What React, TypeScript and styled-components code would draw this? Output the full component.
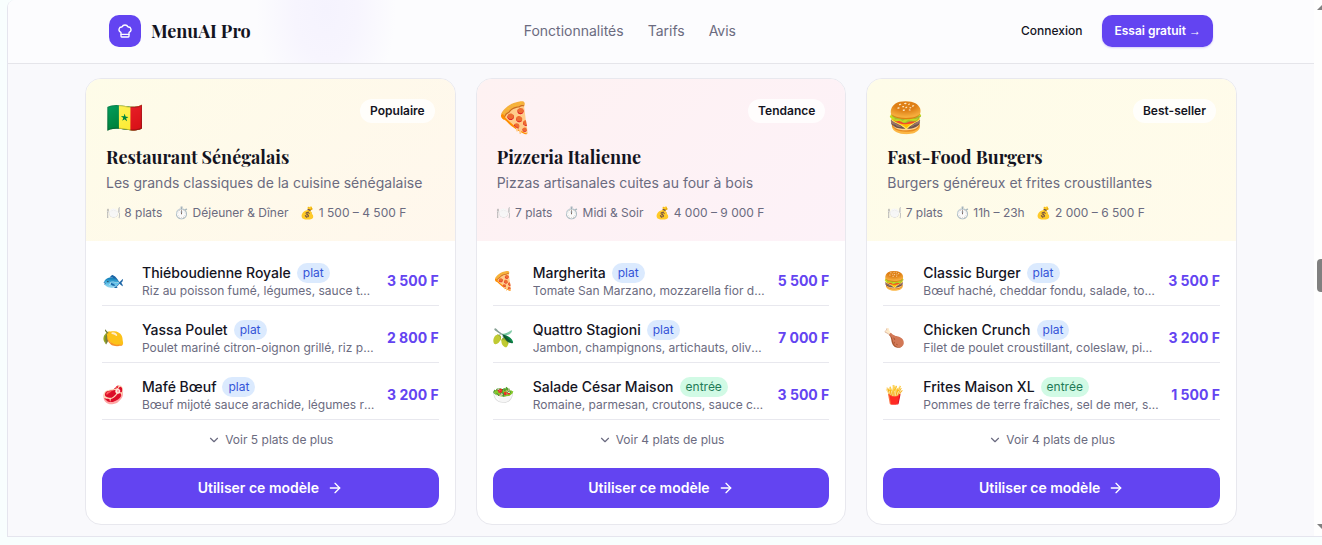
import React from 'react';
import styled, { createGlobalStyle } from 'styled-components';
import { ArrowRight, ChefHat, ChevronDown } from 'lucide-react';

const GlobalStyle = createGlobalStyle`
  *, *::before, *::after { box-sizing: border-box; }
  body {
    margin: 0;
    background: #f8fefe;
    color: #14141f;
    font-family: Inter, "Noto Color Emoji", sans-serif;
    font-size: 14px;
    line-height: 20px;
  }
  h1, h2, h3, p, ul { margin: 0; padding: 0; }
  ul { list-style: none; }
  a { color: inherit; text-decoration: none; }
  button { border: 0; font-family: inherit; cursor: pointer; }
`;

const serif = `"Playfair Display", "Liberation Serif", serif`;

const Frame = styled.div`
  display: flex;
  margin-left: 7px;
  border-left: 1px solid #e5e5ee;
  border-bottom: 1px solid #e5e5ee;
  border-top-left-radius: 8px;
  background: #fff;
  overflow: hidden;
`;

const Viewport = styled.div`
  flex: 1;
  min-width: 0;
  background: #f9f9fc;
`;

const ScrollTrack = styled.div`
  display: flex;
  flex-direction: column;
  align-items: flex-end;
  justify-content: space-between;
  width: 8px;
  padding: 4px 0 6px;
  background: #fefefe;
`;

const ScrollThumb = styled.div`
  width: 5px;
  height: 33px;
  margin-top: 16px;
  border-radius: 4px 0 0 4px;
  background: #808080;
`;

const Header = styled.header`
  border-bottom: 1px solid #e5e5ea;
  background:
    radial-gradient(ellipse 70px 110px at 318px 10px, #f5f3fe 0%, #f7f5fe 45%, #fcfcfe00 100%),
    #fcfcfe;
`;

const HeaderInner = styled.div`
  display: flex;
  align-items: center;
  justify-content: space-between;
  max-width: 1152px;
  margin: 0 auto;
  padding: 15px 24px 16px;
`;

const Brand = styled.a`
  display: flex;
  align-items: center;
  gap: 10px;
  font: 700 18px/28px ${serif};
`;

const BrandMark = styled.span`
  display: grid;
  place-items: center;
  width: 32px;
  height: 32px;
  border-radius: 10px;
  background: #6344f1;
  color: #fff;
`;

const Nav = styled.nav`
  display: flex;
  gap: 24px;
  color: #6b6b80;
`;

const Actions = styled.div`
  display: flex;
  align-items: center;
  gap: 8px;
`;

const ActionButton = styled.button<{ $primary?: boolean }>`
  height: 32px;
  padding: 0 12px;
  border-radius: 10px;
  background: ${({ $primary }) => ($primary ? '#6344f1' : 'transparent')};
  box-shadow: ${({ $primary }) => ($primary ? '0 1px 2px #6344f140' : 'none')};
  color: ${({ $primary }) => ($primary ? '#fff' : '#14141f')};
  font-size: 12px;
  font-weight: ${({ $primary }) => ($primary ? 600 : 500)};
  line-height: 16px;
`;

const Arrow = styled.span`
  font-family: "Liberation Sans", sans-serif;
  font-weight: 400;
`;

const Cards = styled.main`
  display: grid;
  grid-template-columns: repeat(3, minmax(0, 1fr));
  gap: 20px;
  max-width: 1152px;
  margin: 0 auto;
  padding: 14px 0 11px;
`;

const Card = styled.article`
  overflow: hidden;
  border: 1px solid #e8e8ee;
  border-radius: 16px;
  background: #fff;
`;

const CardTop = styled.div<{ $from: string; $to: string }>`
  padding: 20px;
  background: linear-gradient(135deg, ${({ $from }) => $from}, ${({ $to }) => $to});
`;

const CardTopRow = styled.div`
  display: flex;
  align-items: flex-start;
  justify-content: space-between;
  margin-bottom: 12px;
`;

const Emblem = styled.span`
  font-size: 30px;
  line-height: 36px;
`;

const Badge = styled.span`
  padding: 4px 10px;
  border-radius: 12px;
  background: #ffffffcc;
  font-size: 12px;
  font-weight: 600;
  line-height: 16px;
`;

const CardTitle = styled.h3`
  font: 700 18px/20px ${serif};
`;

const CardText = styled.p`
  margin-top: 6px;
  color: #6b6b80;
`;

const Meta = styled.ul`
  display: flex;
  gap: 12px;
  margin-top: 12px;
  color: #6b6b80;
  font-size: 12px;
  line-height: 16px;
  white-space: nowrap;
`;

const CardBody = styled.div`
  display: flex;
  flex-direction: column;
  gap: 16px;
  padding: 16px;
`;

const DishGroup = styled.div`
  display: flex;
  flex-direction: column;
  gap: 8px;
`;

const Dishes = styled.ul`
  display: flex;
  flex-direction: column;
  gap: 8px;
`;

const Dish = styled.li`
  display: flex;
  align-items: center;
  gap: 12px;
  padding: 6px 0;
  border-bottom: 1px solid #e8e8ee;
`;

const DishIcon = styled.span`
  flex: none;
  width: 28px;
  font-size: 18px;
  line-height: 28px;
`;

const DishInfo = styled.div`
  flex: 1;
  min-width: 0;
`;

const DishHeading = styled.div`
  display: flex;
  align-items: center;
  gap: 6px;
  font-weight: 500;
`;

const Tag = styled.span<{ $starter: boolean }>`
  padding: 2px 6px;
  border-radius: 10px;
  background: ${({ $starter }) => ($starter ? '#d1fae5' : '#dbeafe')};
  color: ${({ $starter }) => ($starter ? '#1f7a57' : '#3454d8')};
  font-size: 12px;
  font-weight: 400;
  line-height: 16px;
`;

const DishText = styled.p`
  overflow: hidden;
  color: #6b6b80;
  font-size: 12px;
  line-height: 16px;
  text-overflow: ellipsis;
  white-space: nowrap;
`;

const Price = styled.span`
  flex: none;
  color: #6344f1;
  font-weight: 700;
`;

const MoreButton = styled.button`
  display: flex;
  align-items: center;
  justify-content: center;
  gap: 4px;
  width: 100%;
  padding: 4px 0;
  background: none;
  color: #6b6b80;
  font-size: 12px;
  line-height: 16px;
`;

const UseButton = styled.button`
  display: flex;
  align-items: center;
  justify-content: center;
  gap: 8px;
  height: 40px;
  border-radius: 12px;
  background: #6344f1;
  color: #fff;
  font-size: 14px;
  font-weight: 600;
  line-height: 20px;
`;

type DishData = { icon: string; name: string; tag: string; text: string; price: string };
type Template = {
  emblem: string; badge: string; title: string; text: string;
  meta: string[]; from: string; to: string; more: number; dishes: DishData[];
};

const templates: Template[] = [
  {
    emblem: '🇸🇳', badge: 'Populaire', title: 'Restaurant Sénégalais',
    text: 'Les grands classiques de la cuisine sénégalaise',
    meta: ['🍽️ 8 plats', '⏱️ Déjeuner & Dîner', '💰 1 500 – 4 500 F'],
    from: '#fefce8', to: '#fff7ed', more: 5,
    dishes: [
      { icon: '🐟', name: 'Thiéboudienne Royale', tag: 'plat', text: 'Riz au poisson fumé, légumes, sauce tomate', price: '3 500 F' },
      { icon: '🍋', name: 'Yassa Poulet', tag: 'plat', text: 'Poulet mariné citron-oignon grillé, riz parfumé', price: '2 800 F' },
      { icon: '🥩', name: 'Mafé Bœuf', tag: 'plat', text: 'Bœuf mijoté sauce arachide, légumes racines', price: '3 200 F' },
    ],
  },
  {
    emblem: '🍕', badge: 'Tendance', title: 'Pizzeria Italienne',
    text: 'Pizzas artisanales cuites au four à bois',
    meta: ['🍽️ 7 plats', '⏱️ Midi & Soir', '💰 4 000 – 9 000 F'],
    from: '#fef2f2', to: '#fdf2f8', more: 4,
    dishes: [
      { icon: '🍕', name: 'Margherita', tag: 'plat', text: 'Tomate San Marzano, mozzarella fior di latte', price: '5 500 F' },
      { icon: '🫒', name: 'Quattro Stagioni', tag: 'plat', text: 'Jambon, champignons, artichauts, olives noires', price: '7 000 F' },
      { icon: '🥗', name: 'Salade César Maison', tag: 'entrée', text: 'Romaine, parmesan, croutons, sauce césar', price: '3 500 F' },
    ],
  },
  {
    emblem: '🍔', badge: 'Best-seller', title: 'Fast-Food Burgers',
    text: 'Burgers généreux et frites croustillantes',
    meta: ['🍽️ 7 plats', '⏱️ 11h – 23h', '💰 2 000 – 6 500 F'],
    from: '#fefce8', to: '#fffbeb', more: 4,
    dishes: [
      { icon: '🍔', name: 'Classic Burger', tag: 'plat', text: 'Bœuf haché, cheddar fondu, salade, tomate', price: '3 500 F' },
      { icon: '🍗', name: 'Chicken Crunch', tag: 'plat', text: 'Filet de poulet croustillant, coleslaw, pickles', price: '3 200 F' },
      { icon: '🍟', name: 'Frites Maison XL', tag: 'entrée', text: 'Pommes de terre fraîches, sel de mer, sauce', price: '1 500 F' },
    ],
  },
];

function TemplateCard({ data }: { data: Template }) {
  return (
    <Card>
      <CardTop $from={data.from} $to={data.to}>
        <CardTopRow>
          <Emblem>{data.emblem}</Emblem>
          <Badge>{data.badge}</Badge>
        </CardTopRow>
        <CardTitle>{data.title}</CardTitle>
        <CardText>{data.text}</CardText>
        <Meta>{data.meta.map((m) => <li key={m}>{m}</li>)}</Meta>
      </CardTop>
      <CardBody>
        <DishGroup>
          <Dishes>
            {data.dishes.map((d) => (
              <Dish key={d.name}>
                <DishIcon>{d.icon}</DishIcon>
                <DishInfo>
                  <DishHeading>
                    {d.name}
                    <Tag $starter={d.tag === 'entrée'}>{d.tag}</Tag>
                  </DishHeading>
                  <DishText>{d.text}</DishText>
                </DishInfo>
                <Price>{d.price}</Price>
              </Dish>
            ))}
          </Dishes>
          <MoreButton type="button">
            <ChevronDown size={14} />
            {`Voir ${data.more} plats de plus`}
          </MoreButton>
        </DishGroup>
        <UseButton type="button">
          Utiliser ce modèle
          <ArrowRight size={16} />
        </UseButton>
      </CardBody>
    </Card>
  );
}

export default function App() {
  return (
    <>
      <GlobalStyle />
      <Frame>
        <Viewport>
          <Header>
            <HeaderInner>
              <Brand href="#">
                <BrandMark><ChefHat size={16} /></BrandMark>
                MenuAI Pro
              </Brand>
              <Nav>
                <a href="#fonctionnalites">Fonctionnalités</a>
                <a href="#tarifs">Tarifs</a>
                <a href="#avis">Avis</a>
              </Nav>
              <Actions>
                <ActionButton type="button">Connexion</ActionButton>
                <ActionButton type="button" $primary>Essai gratuit <Arrow>→</Arrow></ActionButton>
              </Actions>
            </HeaderInner>
          </Header>
          <Cards>
            {templates.map((t) => <TemplateCard key={t.title} data={t} />)}
          </Cards>
        </Viewport>
        <ScrollTrack aria-hidden="true">
          <svg width="5" height="6" viewBox="0 0 5 6"><path d="M0 6L5 1V6Z" fill="#808080" /></svg>
          <ScrollThumb />
          <svg width="5" height="6" viewBox="0 0 5 6"><path d="M0 0H5V5Z" fill="#808080" /></svg>
        </ScrollTrack>
      </Frame>
    </>
  );
}
